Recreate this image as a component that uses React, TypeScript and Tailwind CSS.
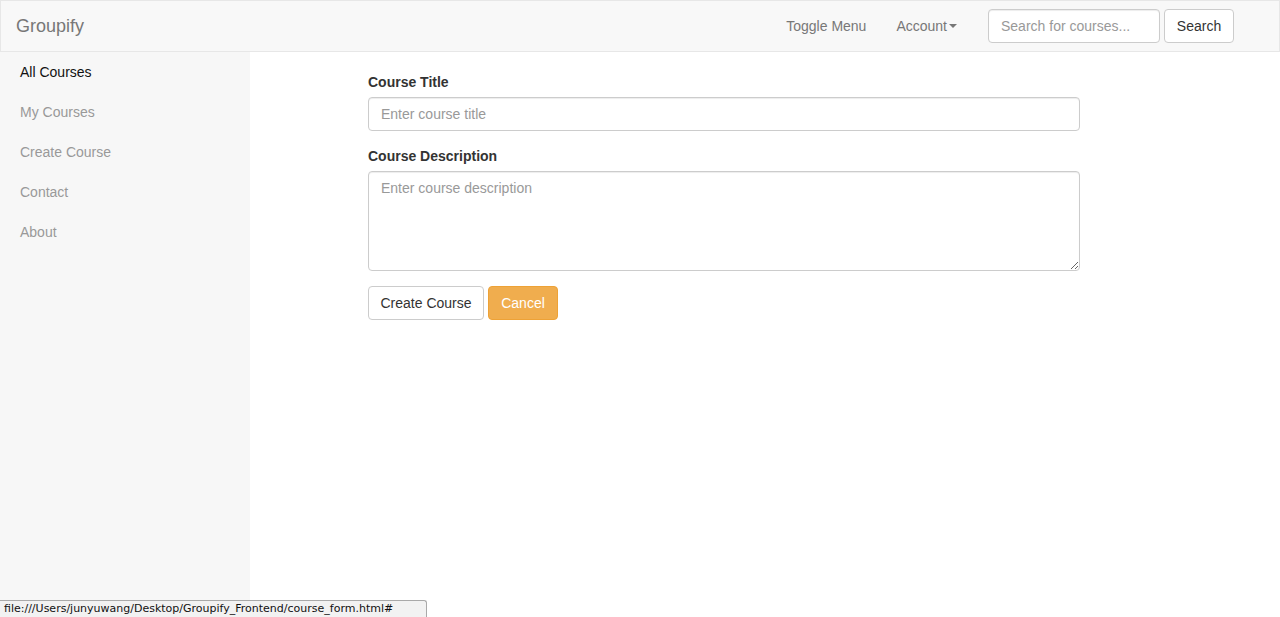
export default function App() {
    const links = ["All Courses", "My Courses", "Create Course", "Contact", "About"]
    return (
        <div className="relative flex h-[617px] flex-col overflow-hidden bg-white font-['Liberation_Sans',Arial,sans-serif] text-[14px] text-[#333]">
            <nav className="flex h-[52px] shrink-0 items-center border border-[#e7e7e7] bg-[#f8f8f8]">
                <a href="#" className="px-[15px] text-[18px] leading-[20px] text-[#777]">Groupify</a>
                <div className="ml-auto flex items-center">
                    <a href="#" className="px-[15px] leading-[20px] text-[#777]">Toggle Menu</a>
                    <a href="#" className="flex items-center px-[15px] leading-[20px] text-[#777]">
                        Account
                        <span className="ml-[2px] inline-block h-0 w-0 border-x-[4px] border-t-[4px] border-x-transparent border-t-[#777]"></span>
                    </a>
                    <form className="ml-[16px] mr-[45px] flex items-center gap-[4px]" onSubmit={e => e.preventDefault()}>
                        <input
                            type="text"
                            placeholder="Search for courses..."
                            className="h-[34px] w-[172px] rounded-[4px] border border-[#ccc] bg-white px-3 text-[14px] shadow-[inset_0_1px_1px_rgba(0,0,0,0.075)] outline-none placeholder:text-[#999]"
                        />
                        <button className="h-[34px] w-[70px] rounded-[4px] border border-[#ccc] bg-white text-[14px] text-[#333]">Search</button>
                    </form>
                </div>
            </nav>

            <div className="flex flex-1">
                <aside className="w-[250px] shrink-0 bg-[#f7f7f7]">
                    <ul>
                        {links.map((l, i) => (
                            <li key={l}>
                                <a href="#" className={"block px-5 py-[10px] leading-[20px] " + (i === 0 ? "text-[#111]" : "text-[#999]")}>{l}</a>
                            </li>
                        ))}
                    </ul>
                </aside>

                <main className="flex-1 pl-[118px] pt-5">
                    <form className="w-[712px]" onSubmit={e => e.preventDefault()}>
                        <div className="mb-[15px]">
                            <label className="mb-[5px] block font-bold leading-[20px]">Course Title</label>
                            <input
                                type="text"
                                placeholder="Enter course title"
                                className="block h-[34px] w-full rounded-[4px] border border-[#ccc] px-3 text-[14px] shadow-[inset_0_1px_1px_rgba(0,0,0,0.075)] outline-none placeholder:text-[#999]"
                            />
                        </div>
                        <div className="mb-[15px]">
                            <label className="mb-[5px] block font-bold leading-[20px]">Course Description</label>
                            <textarea
                                placeholder="Enter course description"
                                className="block h-[100px] w-full rounded-[4px] border border-[#ccc] px-3 py-[6px] text-[14px] leading-[20px] shadow-[inset_0_1px_1px_rgba(0,0,0,0.075)] outline-none placeholder:text-[#999]"
                            />
                        </div>
                        <div className="flex gap-[4px]">
                            <button className="h-[34px] w-[116px] rounded-[4px] border border-[#ccc] bg-white text-[14px] text-[#333]">Create Course</button>
                            <button className="h-[34px] w-[70px] rounded-[4px] border border-[#eea236] bg-[#f0ad4e] text-[14px] text-white">Cancel</button>
                        </div>
                    </form>
                </main>
            </div>

            <div className="absolute bottom-0 left-0 h-[17px] w-[427px] rounded-tr-[3px] border border-b-0 border-l-0 border-[#a9a9a9] bg-[#f2f2f2] pl-[4px] font-['DejaVu_Sans',sans-serif] text-[11px] leading-[16px] text-[#111]">
                file:///Users/junyuwang/Desktop/Groupify_Frontend/course_form.html#
            </div>
        </div>
    )
}
